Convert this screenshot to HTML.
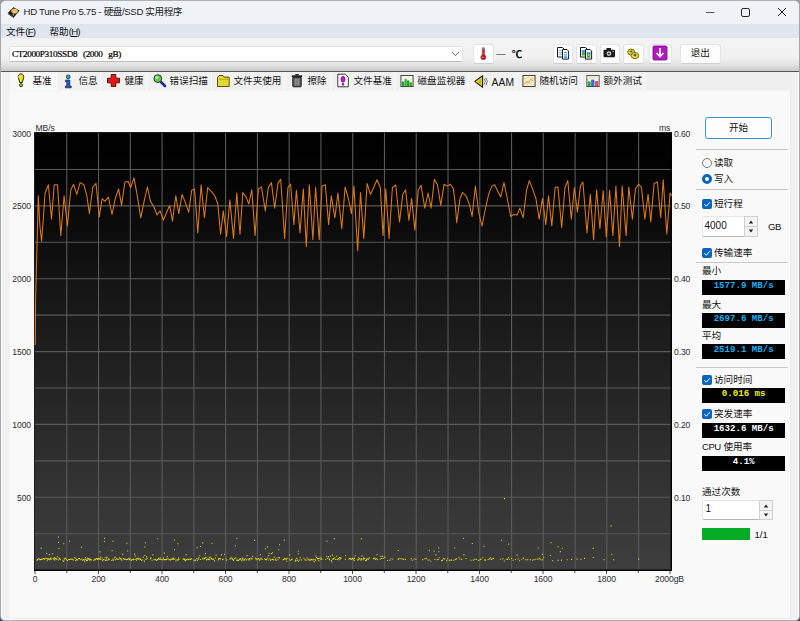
<!DOCTYPE html>
<html lang="zh-CN">
<head>
<meta charset="utf-8">
<title>HD Tune Pro 5.75 - 硬盘/SSD 实用程序</title>
<style>
*{box-sizing:border-box;margin:0;padding:0}
html,body{width:800px;height:621px;overflow:hidden}
body{position:relative;background:linear-gradient(#9c9c9c 0,#9c9c9c 50%,#2f5d7c 50%,#2f5d7c 100%);font-family:"Liberation Sans","Noto Sans CJK SC",sans-serif;font-size:9.6px;color:#1a1a1a}
.abs{position:absolute}
#win{position:absolute;left:0;top:0;width:800px;height:621px;background:#f0f0f0;border-radius:6px 6px 5px 5px;overflow:hidden;border:1px solid #a6a8ac;border-color:#b0b0b0 #a4a6a8 #a9b1bd #a2a8b2;box-shadow:inset 0 0 0 .8px #fcfcfc}
#titlebar{position:absolute;left:0;top:0;width:798px;height:23px;background:#eff3f8}
#title{position:absolute;left:22.5px;top:4px;letter-spacing:-.45px;font-size:9.6px;line-height:14px;color:#1b1b1b;white-space:nowrap}
.la{letter-spacing:-.27px}
.lb{letter-spacing:-.75px}
#menubar{position:absolute;left:0;top:23px;width:798px;height:14.4px;background:#dfe6ef}
.menu{position:absolute;top:1px;line-height:13px;font-size:9.6px;color:#111;white-space:nowrap}
#toolbar{position:absolute;left:0;top:37.4px;width:798px;height:33.9px;background:linear-gradient(#f3f3f3 0,#f1f1f1 60%,#e2e2e2 82%,#c9c9c9 100%);border-bottom:1.6px solid #555}
#combo{position:absolute;left:8.3px;top:7.8px;width:454px;height:16px;background:#fff;border:1px solid #e2e2e2;border-bottom-color:#bdbdbd;border-radius:2px}
#combo span{position:absolute;left:1.6px;top:.6px;font-family:"Liberation Serif","Noto Serif CJK SC",serif;font-size:9.2px;letter-spacing:-.36px;word-spacing:3.7px;line-height:13px;white-space:pre;color:#000;-webkit-text-stroke:.22px #000}
.tbtn{position:absolute;top:6.1px;height:19.2px;width:20.5px;background:#fdfdfd;border:1px solid #e4e4e4;border-bottom-color:#cfcfcf;border-radius:3px}
.tbtn svg{position:absolute;left:0;top:0}
#tabs{position:absolute;left:8.5px;top:71.3px;width:781px;height:18px}
.tab{position:absolute;top:0;height:18px;background:#f1f1f1;border-right:1px solid #fafafa}
.tab.act{background:#f9f9f9;border:none}
.tab span{position:absolute;top:2px;line-height:13px;font-size:9.6px;white-space:nowrap;color:#111}
.tab svg{position:absolute;top:1px}
#page{position:absolute;left:8.5px;top:89px;width:781.5px;height:528.5px;background:#f9f9f9;border:1px solid #ececec;border-top-color:#f4f4f4;border-left-color:#fbfbfb}
.ax{position:absolute;font-family:"Liberation Sans",sans-serif;letter-spacing:-.12px;font-size:8.6px;line-height:10px;color:#2c2c30;white-space:nowrap}
.lbl{position:absolute;font-size:9.6px;line-height:12px;white-space:nowrap;color:#111}
.sep{position:absolute;left:695px;width:92px;height:1px;background:#c9c9c9;margin-top:-.5px}
.box{position:absolute;left:701px;width:83.3px;height:15px;background:#000;text-align:center;font-family:"Liberation Mono",monospace;font-weight:bold;font-size:9.1px;line-height:12px;white-space:pre;color:#10b2f4}
.chk{position:absolute;left:700.6px;width:10px;height:10px;background:#0a64c2;border-radius:2px}
.chk svg{position:absolute;left:0;top:0}
.spin{position:absolute;background:#fff;border:1px solid #e6e6e6;border-bottom-color:#b4b4b4;border-radius:2px}
.spin .v{position:absolute;left:4px;font-family:"Liberation Sans",sans-serif;font-size:9.6px;color:#111}
.spin .ud{position:absolute;right:-1px;top:-1px;bottom:-1px;width:14px;background:#f3f3f3;border:1px solid #cfcfcf}
</style>
</head>
<body>
<div id="win">
  <div id="titlebar">
    <svg class="abs" style="left:6px;top:5px" width="14" height="13" viewBox="0 0 14 13">
      <polygon points="0.8,7 6.5,1.2 12.6,4.6 6.8,11.4" fill="#161616"/>
      <polygon points="0.8,7 6.8,11.4 6.8,12.3 0.8,8" fill="#3a3a3a"/>
      <ellipse cx="7.6" cy="5.1" rx="3.3" ry="2.7" fill="#e8a93c"/>
      <ellipse cx="7.6" cy="5.1" rx="2.3" ry="1.8" fill="#f5c56a"/>
      <ellipse cx="7.7" cy="5" rx="0.9" ry="0.6" fill="#aeb4c4"/>
      <rect x="5.6" y="7.6" width="1.6" height="2" fill="#9a9a9a"/>
    </svg>
    <div id="title"><span class="la">HD Tune Pro 5.75 - </span>硬盘/<span class="la">SSD</span> 实用程序</div>
    <svg class="abs" style="left:700px;top:4px" width="92" height="16" viewBox="0 0 92 16">
      <g fill="none" stroke="#222" stroke-width="1">
        <path d="M5,7.5h8.4" stroke="#444" stroke-width=".9"/>
        <rect x="40.5" y="3.5" width="8" height="8" rx="1.6"/>
        <path d="M77,3l8,8M85,3l-8,8"/>
      </g>
    </svg>
  </div>
  <div id="menubar">
    <div class="menu" style="left:5px">文件<span class="lb">(<u>F</u>)</span></div>
    <div class="menu" style="left:48.5px">帮助<span class="lb">(<u>H</u>)</span></div>
  </div>
  <div id="toolbar">
    <div id="combo"><span>CT2000P310SSD8 (2000 gB)</span>
      <svg class="abs" style="left:441px;top:4px" width="9" height="6" viewBox="0 0 9 6"><path d="M1,1l3.5,3.5L8,1" fill="none" stroke="#555" stroke-width="0.9"/></svg>
    </div>
    <!-- thermometer -->
    <div class="tbtn" style="left:471.5px;width:21.5px">
      <svg width="19" height="16" viewBox="0 0 19 16"><rect x="8.3" y="2.6" width="2.4" height="9" rx="1.1" fill="#e62020" stroke="#555" stroke-width=".5"/><rect x="8.5" y="2.7" width="2" height="1.6" rx=".8" fill="#28b8f0"/><circle cx="9.3" cy="12.3" r="2.5" fill="#e01010" stroke="#444" stroke-width=".5"/><circle cx="8.7" cy="12.4" r=".7" fill="#f8b0a0"/></svg>
    </div>
    <div class="abs" style="left:495px;top:8.2px;font-size:9.6px;line-height:12px;white-space:nowrap;color:#222">— <span style="margin-left:3.5px;font-weight:bold;color:#000;font-size:10.5px;position:relative;top:1.2px">℃</span></div>
    <!-- copy -->
    <div class="tbtn" style="left:551.5px">
      <svg width="18" height="17" viewBox="0 0 18 17"><path d="M3.5,2.5h5l1.5,1.5v8h-6.5z" fill="#fff" stroke="#1a1a1a" stroke-width="1"/><path d="M5,5.5h3.5M5,7.5h3.5M5,9.5h3.5" stroke="#6ab4ee" stroke-width="1.2"/><path d="M8.5,4.5h4.5l1.6,1.6v8h-6.1z" fill="#fff" stroke="#1a1a1a" stroke-width="1"/><path d="M10,7.5h3.2M10,9.3h3.2M10,11.1h3.2M10,12.6h3.2" stroke="#4a9ee6" stroke-width="1.1"/></svg>
    </div>
    <div class="tbtn" style="left:575px">
      <svg width="18" height="17" viewBox="0 0 18 17"><path d="M3.5,2.5h5l1.5,1.5v8h-6.5z" fill="#fff" stroke="#1a1a1a" stroke-width="1"/><rect x="4.8" y="5" width="3.8" height="5.5" fill="#48b050"/><rect x="4.8" y="5" width="3.8" height="2" fill="#4a9ee6"/><path d="M8.5,4.5h4.5l1.6,1.6v8h-6.1z" fill="#fff" stroke="#1a1a1a" stroke-width="1"/><rect x="9.8" y="7" width="3.6" height="5.8" fill="#40a848"/><rect x="9.8" y="7" width="3.6" height="2" fill="#4a9ee6"/><rect x="11" y="9.5" width="1.5" height="1.5" fill="#e0c030"/></svg>
    </div>
    <!-- camera -->
    <div class="tbtn" style="left:598.5px">
      <svg width="18" height="16" viewBox="1 .2 18 16"><rect x="3.5" y="5" width="11.5" height="7.5" rx="1" fill="#1c1c1c"/><rect x="6.5" y="3.2" width="4.5" height="2.4" fill="#1c1c1c"/><circle cx="9" cy="8.8" r="2.3" fill="#d8d8d8"/><circle cx="9" cy="8.8" r="1.2" fill="#444"/><rect x="12.4" y="6" width="1.6" height="1.2" fill="#5ac85a"/></svg>
    </div>
    <!-- link / coins -->
    <div class="tbtn" style="left:622px">
      <svg width="18" height="17" viewBox="0 0 18 17"><ellipse cx="7.2" cy="7" rx="3.6" ry="3" fill="#e4d630" stroke="#6a6010" stroke-width=".9"/><ellipse cx="7.2" cy="6.6" rx="1.3" ry="1" fill="#5a5a4a"/><ellipse cx="11" cy="10.6" rx="3.8" ry="3.1" fill="#e4d630" stroke="#6a6010" stroke-width=".9"/><ellipse cx="11" cy="10.2" rx="1.4" ry="1.1" fill="#5a5a4a"/></svg>
    </div>
    <!-- download -->
    <div class="tbtn" style="left:647.5px;width:23px"><!--dl-->
      <svg width="20" height="16" viewBox="0 0 20 16"><rect x="3" y="1" width="14" height="14" rx="1.2" fill="#b418c4" stroke="#6a0a78" stroke-width=".8"/><path d="M10,3v8M6.5,8l3.5,3.6L13.5,8" fill="none" stroke="#fff" stroke-width="1.7"/></svg>
    </div>
    <div class="tbtn" style="left:678.5px;width:41.5px;text-align:center;line-height:16px;font-size:9.6px;color:#111">退出</div>
  </div>

  <div id="tabs">
    <div class="tab act" style="left:0px;width:47px"><svg style="left:4px;top:1px" width="12" height="15" viewBox="0 0 12 15"><path d="M7,0.9c2.3,0 3,1.8 2.6,3.6l-1.3,5h-2.6l-1.3,-5c-0.4,-1.8 0.3,-3.6 2.6,-3.6z" fill="#ece420" stroke="#2a2600" stroke-width="1"/><path d="M5.6,2.2c-0.8,0.6 -0.8,1.8 -0.4,3" stroke="#fffcb0" stroke-width=".8" fill="none"/><circle cx="7" cy="12.2" r="1.5" fill="#e8e020" stroke="#2a2600" stroke-width="1"/></svg><span style="left:23px">基准</span></div>
    <div class="tab" style="left:47px;width:44px"><svg style="left:5px;top:1.7px" width="12" height="15" viewBox="0 0 12 15"><circle cx="6.2" cy="2.8" r="1.9" fill="#2a9ae8" stroke="#123" stroke-width=".7"/><path d="M3.6,6h4.2v6h1.4v1.8h-5.8v-1.8h1.4v-4.2h-1.2z" fill="#2a58d8" stroke="#123" stroke-width=".7"/></svg><span style="left:22px">信息</span></div>
    <div class="tab" style="left:91px;width:46px"><svg style="left:5px;top:1px" width="15" height="15" viewBox="0 0 15 15"><path d="M5.2,1.5h4.6v3.7h3.7v4.6h-3.7v3.7h-4.6v-3.7h-3.7v-4.6h3.7z" fill="#e81818" stroke="#4a0a0a" stroke-width=".9"/></svg><span style="left:24px">健康</span></div>
    <div class="tab" style="left:137px;width:65px"><svg style="left:5px;top:1px" width="15" height="15" viewBox="0 0 15 15"><path d="M8.5,8.5l4.5,4.5" stroke="#1a2a8a" stroke-width="2.6" stroke-linecap="round"/><circle cx="5.8" cy="5.6" r="3.9" fill="#58d048" stroke="#333" stroke-width="1"/><circle cx="4.8" cy="4.6" r="1.4" fill="#c8f8b8"/></svg><span style="left:23px">错误扫描</span></div>
    <div class="tab" style="left:202px;width:73px"><svg style="left:4px;top:1px" width="15" height="15" viewBox="0 0 15 15"><path d="M1.5,4.5l1.5,-2h4l1.2,1.6h5v9.4h-11.7z" fill="#e6d838" stroke="#4a4200" stroke-width=".9"/><path d="M3,6.2h10.2v7.3" fill="none" stroke="#a89a10" stroke-width=".8"/></svg><span style="left:22px">文件夹使用</span></div>
    <div class="tab" style="left:275px;width:46px"><svg style="left:5px;top:1px" width="14" height="15" viewBox="0 0 14 15"><rect x="2.8" y="4" width="8.4" height="9.8" rx=".8" fill="#555" stroke="#111" stroke-width=".9"/><rect x="1.8" y="2.3" width="10.4" height="1.9" fill="#222"/><rect x="5.3" y="1" width="3.4" height="1.5" fill="#222"/><path d="M5.2,5.5v7M7,5.5v7M8.8,5.5v7" stroke="#bbb" stroke-width=".8"/></svg><span style="left:23px">擦除</span></div>
    <div class="tab" style="left:321px;width:64px"><svg style="left:5px;top:1px" width="14" height="15" viewBox="0 0 14 15"><path d="M1.8,1.2h7.5l3,3v9.6h-10.5z" fill="#fff" stroke="#222" stroke-width=".9"/><ellipse cx="7" cy="6.3" rx="2" ry="3" fill="#c018d0" stroke="#50085a" stroke-width=".6"/><circle cx="7" cy="11.3" r="1.1" fill="#c018d0" stroke="#50085a" stroke-width=".5"/></svg><span style="left:23px">文件基准</span></div>
    <div class="tab" style="left:385px;width:74px"><svg style="left:5.5px;top:1.8px" width="14" height="14" viewBox="0 0 15 15"><rect x="1" y="1.5" width="13" height="12" fill="#f4f4e8" stroke="#222" stroke-width=".9"/><rect x="2" y="8" width="2.5" height="5" fill="#28a028"/><rect x="4.8" y="5.5" width="2.5" height="7.5" fill="#28b838"/><rect x="7.6" y="7" width="2.5" height="6" fill="#209828"/><rect x="10.4" y="9" width="2.6" height="4" fill="#28b028"/></svg><span style="left:23px">磁盘监视器</span></div>
    <div class="tab" style="left:459px;width:48px"><svg style="left:5px;top:1.7px" width="15" height="15" viewBox="0 0 15 15"><path d="M0.8,7.4l7.8,-5.6v11.4z" fill="#e2d820" stroke="#1a1a1a" stroke-width="1.1" stroke-linejoin="round"/><path d="M6,5.5v4" stroke="#8a8410" stroke-width=".8"/><path d="M10.3,4.6q2,2.8 0,5.8M12,3.8q2.6,3.6 0,7.4" fill="none" stroke="#666" stroke-width=".9"/></svg><span style="left:23px;top:3.6px;font-size:10.3px;letter-spacing:.1px">AAM</span></div>
    <div class="tab" style="left:507px;width:65px"><svg style="left:5px;top:1.8px" width="14" height="14" viewBox="0 0 15 15"><rect x="1" y="1.5" width="13" height="12" fill="#f6f0c8" stroke="#222" stroke-width=".9"/><path d="M2.5,11l2.5,-3l2,1.5l2.5,-4l2.5,2" fill="none" stroke="#e07830" stroke-width=".9"/><path d="M3,5h1M6,4h1M9,9.5h1M11,4.5h1M5,11.5h1" stroke="#b8a020" stroke-width=".9"/></svg><span style="left:23px">随机访问</span></div>
    <div class="tab" style="left:572px;width:63px"><svg style="left:4.5px;top:1.8px" width="14" height="14" viewBox="0 0 15 15"><rect x="1" y="1.5" width="13" height="12" fill="#fafafa" stroke="#222" stroke-width=".9"/><rect x="1.5" y="2" width="12" height="3" fill="#f0e8c0"/><rect x="2" y="8" width="3" height="5" fill="#28a838"/><rect x="5.5" y="6" width="3.5" height="7" fill="#3a68d8"/><rect x="9.5" y="7.5" width="3.5" height="5.5" fill="#d85858"/></svg><span style="left:22px">额外测试</span></div>
  </div>
  <div id="page"></div>

  <!-- chart -->
  <svg class="abs" style="left:-1px;top:99px" width="700" height="500" viewBox="0 100 700 500">
    <defs>
      <linearGradient id="cg" x1="0" y1="0" x2="0" y2="1">
        <stop offset="0" stop-color="#000"/><stop offset="0.12" stop-color="#050505"/><stop offset="0.35" stop-color="#151515"/><stop offset="0.6" stop-color="#252525"/><stop offset="0.85" stop-color="#363636"/><stop offset="1" stop-color="#3e3e3e"/>
      </linearGradient>
    </defs>
    <rect x="34" y="132" width="638" height="439" fill="#0c0c0c"/>
    <rect x="35" y="133" width="636" height="437" fill="url(#cg)"/>
    <g stroke="#5a5a5a" stroke-width="1.1">
      <path d="M66.77,133V570"/>
      <path d="M98.54,133V570"/>
      <path d="M130.31,133V570"/>
      <path d="M162.08,133V570"/>
      <path d="M193.85,133V570"/>
      <path d="M225.62,133V570"/>
      <path d="M257.39,133V570"/>
      <path d="M289.16,133V570"/>
      <path d="M320.93,133V570"/>
      <path d="M352.7,133V570"/>
      <path d="M384.47,133V570"/>
      <path d="M416.24,133V570"/>
      <path d="M448.01,133V570"/>
      <path d="M479.78,133V570"/>
      <path d="M511.55,133V570"/>
      <path d="M543.32,133V570"/>
      <path d="M575.09,133V570"/>
      <path d="M606.86,133V570"/>
      <path d="M638.63,133V570"/>
      <path d="M35,533.68H671"/>
      <path d="M35,497.26H671"/>
      <path d="M35,460.84H671"/>
      <path d="M35,424.42H671"/>
      <path d="M35,388H671"/>
      <path d="M35,351.58H671"/>
      <path d="M35,315.16H671"/>
      <path d="M35,278.74H671"/>
      <path d="M35,242.32H671"/>
      <path d="M35,205.9H671"/>
      <path d="M35,169.48H671"/>
    </g>
    <rect x="34.5" y="132.5" width="637" height="438" fill="none" stroke="#1c1c1c" stroke-width="1"/>
    <path d="M34,570.2h638" stroke="#000" stroke-width="1.6"/>
    <path d="M671.3,132v439" stroke="#000" stroke-width="1.4"/>
    <g stroke="#4a4a4a" stroke-width="1">
      <path d="M35,571v3"/>
      <path d="M66.75,571v2"/>
      <path d="M98.5,571v3"/>
      <path d="M130.25,571v2"/>
      <path d="M162,571v3"/>
      <path d="M193.75,571v2"/>
      <path d="M225.5,571v3"/>
      <path d="M257.25,571v2"/>
      <path d="M289,571v3"/>
      <path d="M320.75,571v2"/>
      <path d="M352.5,571v3"/>
      <path d="M384.25,571v2"/>
      <path d="M416,571v3"/>
      <path d="M447.75,571v2"/>
      <path d="M479.5,571v3"/>
      <path d="M511.25,571v2"/>
      <path d="M543,571v3"/>
      <path d="M574.75,571v2"/>
      <path d="M606.5,571v3"/>
      <path d="M638.25,571v2"/>
      <path d="M670,571v3"/>
    </g>
    <path d="M35.3,345.0 L35.6,300.0 L38.3,195.8 L39.9,226.0 L41.6,241.1 L43.2,220.5 L45.1,193.0 L48.4,184.8 L51.5,219.1 L54.2,184.8 L57.5,184.8 L60.8,235.6 L64.1,195.8 L67.4,226.0 L70.7,190.3 L73.5,184.2 L76.8,194.4 L80.1,182.6 L83.9,184.8 L86.9,195.8 L89.4,213.6 L92.7,187.5 L96.0,183.4 L99.3,216.9 L102.1,198.5 L104.8,201.3 L108.4,197.1 L112.0,214.5 L115.3,198.5 L118.6,188.9 L121.6,205.4 L124.9,182.0 L128.2,181.5 L130.7,187.5 L134.0,177.9 L137.3,195.8 L140.8,217.8 L144.1,201.3 L147.4,187.0 L150.5,201.3 L153.8,206.8 L157.1,215.0 L160.1,210.9 L163.4,220.0 L166.7,212.3 L169.7,205.4 L172.5,221.1 L175.8,195.8 L178.8,213.6 L182.1,194.4 L185.4,202.6 L188.7,212.3 L191.7,190.3 L194.5,188.9 L197.8,232.9 L201.1,184.8 L204.4,217.8 L207.7,187.5 L211.5,191.6 L214.8,195.8 L217.8,204.0 L220.6,234.3 L223.3,210.9 L226.6,236.5 L229.9,199.9 L233.5,238.4 L236.8,193.0 L240.0,234.3 L242.8,192.5 L246.1,197.1 L248.8,204.0 L251.8,189.7 L255.1,235.6 L258.4,188.9 L261.5,187.0 L265.3,210.9 L268.3,187.5 L271.4,182.6 L274.7,208.1 L278.0,183.4 L280.7,179.3 L284.6,238.4 L287.9,187.5 L290.6,184.2 L293.9,224.6 L296.4,190.3 L300.0,232.9 L303.3,188.9 L306.3,246.6 L309.3,184.8 L312.9,239.8 L315.6,187.5 L319.2,239.8 L322.0,186.1 L325.3,184.8 L328.6,224.6 L331.3,195.8 L334.9,217.8 L337.9,193.0 L341.8,228.8 L345.1,187.0 L348.4,198.5 L351.4,213.6 L353.9,186.1 L357.7,250.8 L360.5,192.5 L363.8,238.4 L367.1,183.4 L370.4,194.4 L373.7,187.5 L377.0,179.8 L380.3,187.5 L383.0,235.6 L385.8,188.9 L389.1,238.4 L392.4,187.5 L395.7,184.8 L399.5,221.9 L402.8,194.4 L405.6,189.7 L408.9,220.5 L411.6,198.5 L414.9,230.1 L418.2,190.3 L421.0,185.3 L424.8,208.1 L428.1,193.0 L431.1,208.1 L434.4,179.3 L437.5,184.8 L440.8,205.4 L444.1,184.2 L447.1,186.1 L450.4,184.2 L453.4,188.9 L455.0,201.3 L456.7,222.7 L460.0,198.5 L462.7,192.5 L466.0,195.8 L469.3,204.0 L472.1,216.4 L475.4,186.1 L478.7,212.3 L482.0,226.0 L485.3,209.5 L488.6,194.4 L491.9,186.1 L494.6,184.8 L497.9,191.6 L500.7,197.1 L504.0,182.6 L507.3,198.5 L510.6,216.4 L513.9,214.5 L517.2,215.0 L519.9,208.1 L523.2,217.8 L526.5,190.3 L529.3,180.6 L532.6,188.9 L535.9,198.5 L539.2,219.1 L542.5,198.5 L545.8,224.6 L548.5,195.8 L551.8,226.0 L555.1,187.5 L557.9,187.0 L561.7,227.4 L565.0,187.5 L567.8,180.6 L571.3,219.1 L574.4,187.5 L577.4,212.3 L580.4,186.1 L582.9,182.0 L587.0,232.9 L590.3,194.4 L593.6,239.8 L596.6,189.7 L599.9,228.8 L603.2,190.8 L606.3,237.0 L609.6,190.3 L612.9,235.6 L615.9,186.1 L619.5,246.6 L622.2,186.1 L626.1,235.6 L628.8,187.0 L632.4,219.1 L635.4,188.9 L638.7,184.2 L641.5,187.5 L644.8,219.1 L648.1,194.4 L650.8,221.9 L654.1,183.4 L657.4,182.0 L660.7,217.8 L663.2,179.8 L666.8,234.3 L670.1,193.0 L671.7,195.8" fill="none" stroke="#dc7a18" stroke-width="1.05" stroke-linejoin="round"/>
    <path d="M36.6,560.1h1M36.9,559.6h1M37.3,559.4h1M38.1,558.8h1M39.2,559.1h1M39.8,559.6h1M40.7,559.5h1M41.5,559.3h1M42.2,559.0h1M43.0,558.6h1M44.1,559.2h1M44.4,558.7h1M45.5,558.3h1M46.5,558.6h1M46.8,560.7h1M47.5,559.1h1M47.9,559.2h1M48.5,558.8h1M49.3,559.6h1M49.9,558.7h1M50.4,558.1h1M50.7,559.3h1M51.8,553.7h1M52.7,558.4h1M53.4,559.5h1M53.8,557.7h1M54.2,560.0h1M54.7,558.4h1M55.7,558.9h1M56.3,559.2h1M56.7,556.7h1M57.8,560.0h1M58.4,557.8h1M58.9,558.9h1M59.9,559.3h1M62.3,560.2h1M63.1,561.4h1M63.8,558.3h1M64.2,559.7h1M65.2,558.4h1M66.2,559.8h1M67.1,560.5h1M68.3,559.5h1M69.2,559.5h1M70.1,559.3h1M71.0,559.3h1M72.0,559.2h1M72.8,559.9h1M73.9,557.7h1M74.9,558.3h1M75.3,560.6h1M76.0,559.2h1M76.7,560.0h1M77.2,559.8h1M78.2,558.5h1M79.1,558.6h1M80.2,559.8h1M81.3,559.0h1M82.0,560.3h1M83.0,559.7h1M83.4,559.6h1M84.1,561.1h1M84.8,559.4h1M85.1,557.5h1M86.0,560.6h1M86.4,559.1h1M86.9,560.5h1M87.3,558.4h1M87.7,558.9h1M88.5,559.3h1M88.9,558.7h1M89.4,560.1h1M89.8,559.4h1M90.7,559.9h1M93.3,560.5h1M93.8,559.3h1M94.8,559.6h1M95.7,558.5h1M96.6,559.0h1M96.9,559.4h1M97.3,558.9h1M97.9,558.6h1M98.4,558.6h1M99.0,559.0h1M99.7,559.1h1M100.0,557.0h1M100.5,559.2h1M101.6,558.0h1M102.0,560.7h1M102.8,559.6h1M103.6,559.7h1M104.6,557.8h1M105.0,560.4h1M105.8,560.1h1M106.1,558.2h1M106.5,557.1h1M107.4,560.1h1M108.1,559.1h1M108.9,559.2h1M111.3,560.5h1M112.2,559.0h1M112.9,560.1h1M114.0,557.8h1M114.7,559.6h1M115.2,557.2h1M116.2,558.9h1M116.7,559.3h1M117.4,559.2h1M117.9,559.2h1M119.0,557.7h1M119.6,558.6h1M120.2,558.8h1M120.7,559.1h1M121.3,560.2h1M122.2,554.1h1M122.9,558.8h1M123.2,558.5h1M124.1,559.3h1M124.7,559.4h1M125.8,559.6h1M126.9,559.3h1M127.3,559.5h1M128.3,558.4h1M128.9,559.7h1M129.3,559.6h1M129.8,558.8h1M130.9,560.4h1M131.6,559.5h1M132.7,559.8h1M133.1,559.1h1M134.0,554.1h1M134.5,559.5h1M134.9,556.0h1M135.7,558.8h1M136.0,560.3h1M136.7,558.9h1M137.6,558.0h1M138.1,559.2h1M138.5,559.0h1M139.4,558.7h1M140.0,559.4h1M141.1,560.5h1M141.7,559.7h1M142.8,557.3h1M143.9,561.1h1M144.4,555.5h1M145.0,559.2h1M145.6,559.3h1M146.1,556.7h1M146.7,558.4h1M150.1,558.6h1M150.4,557.9h1M151.5,560.3h1M152.4,554.9h1M153.5,559.8h1M154.6,559.3h1M155.2,559.8h1M156.2,560.5h1M156.8,559.7h1M157.3,559.5h1M157.9,558.4h1M158.6,559.2h1M159.3,559.2h1M159.7,557.7h1M160.3,559.2h1M161.4,559.8h1M162.5,559.6h1M162.9,558.1h1M164.0,559.6h1M164.8,559.6h1M165.4,559.6h1M166.3,559.1h1M166.7,556.6h1M167.6,558.8h1M168.6,559.8h1M169.4,559.7h1M170.1,559.9h1M170.7,559.0h1M171.3,559.2h1M172.0,559.3h1M172.6,558.1h1M173.0,558.8h1M173.4,559.5h1M174.4,559.0h1M175.5,560.9h1M176.6,559.8h1M177.6,560.1h1M178.1,558.0h1M178.5,559.4h1M182.6,559.1h1M183.4,558.9h1M184.1,560.0h1M184.4,559.3h1M185.1,560.6h1M185.5,554.8h1M185.8,559.5h1M186.2,559.6h1M187.3,559.1h1M188.5,559.6h1M189.6,559.0h1M190.0,559.4h1M191.1,558.8h1M193.5,560.2h1M194.6,560.8h1M195.3,559.9h1M196.4,558.5h1M197.0,560.2h1M198.0,559.1h1M198.3,557.7h1M199.2,555.8h1M200.0,559.5h1M202.3,558.9h1M202.7,558.3h1M203.6,558.7h1M204.1,558.2h1M204.7,558.0h1M205.5,557.4h1M206.0,559.9h1M206.7,559.2h1M207.8,559.1h1M208.5,559.5h1M208.8,559.8h1M209.1,557.9h1M209.6,557.1h1M210.6,559.0h1M211.2,558.6h1M212.1,559.3h1M212.6,559.1h1M213.2,559.3h1M214.0,560.9h1M215.1,558.0h1M215.6,555.1h1M217.8,559.9h1M218.1,558.9h1M219.0,558.6h1M220.0,558.8h1M221.0,554.9h1M222.0,559.6h1M222.6,559.2h1M225.3,558.7h1M226.2,560.1h1M229.3,559.0h1M230.3,558.7h1M230.6,557.3h1M231.6,558.3h1M232.1,559.3h1M232.6,559.5h1M233.0,560.4h1M233.9,558.7h1M234.9,558.0h1M235.4,558.0h1M236.1,560.3h1M237.0,560.1h1M237.9,560.5h1M238.7,559.6h1M239.3,558.8h1M239.7,558.7h1M240.2,559.1h1M241.3,560.6h1M241.9,559.1h1M242.4,558.1h1M243.1,560.0h1M244.0,559.9h1M244.9,558.7h1M245.9,559.9h1M246.6,555.6h1M247.6,559.2h1M248.4,560.0h1M248.9,558.5h1M249.2,559.8h1M250.3,558.3h1M251.0,558.7h1M251.7,558.9h1M252.1,556.4h1M255.1,558.1h1M255.6,559.8h1M256.3,558.8h1M257.3,559.5h1M258.1,558.5h1M259.1,560.1h1M259.5,559.6h1M260.0,554.8h1M260.5,558.4h1M261.4,559.3h1M261.7,559.3h1M264.1,558.8h1M265.0,559.6h1M265.6,559.7h1M266.0,559.4h1M267.0,558.0h1M267.7,560.0h1M268.2,555.6h1M268.6,553.3h1M269.3,558.8h1M270.0,560.2h1M270.3,559.7h1M270.9,553.6h1M271.7,559.4h1M272.4,559.4h1M273.2,560.0h1M273.8,557.0h1M274.8,559.1h1M275.6,560.4h1M276.4,557.8h1M277.4,559.6h1M278.3,557.5h1M279.1,557.9h1M282.6,559.6h1M283.5,559.4h1M284.1,558.2h1M284.9,559.0h1M285.9,559.1h1M286.2,561.3h1M286.9,558.3h1M288.8,559.0h1M289.2,554.9h1M289.7,560.5h1M290.7,559.6h1M291.6,559.1h1M294.7,561.3h1M295.1,560.0h1M295.4,560.6h1M296.3,558.4h1M297.0,560.1h1M297.9,561.2h1M298.9,560.0h1M299.9,557.7h1M300.8,559.9h1M303.4,558.3h1M304.4,559.7h1M305.5,560.1h1M306.6,558.0h1M307.5,559.7h1M308.4,559.0h1M309.3,560.4h1M309.8,560.0h1M310.6,559.4h1M311.5,559.7h1M312.2,560.0h1M313.1,559.2h1M313.7,561.6h1M314.4,559.7h1M315.0,560.1h1M315.4,556.1h1M316.1,557.5h1M316.8,558.6h1M317.6,558.8h1M318.0,558.5h1M318.3,560.6h1M318.7,558.2h1M319.8,559.3h1M320.4,557.3h1M320.9,558.7h1M321.4,559.3h1M325.2,559.5h1M326.2,556.3h1M327.2,558.4h1M328.1,556.6h1M328.8,559.1h1M329.4,560.0h1M330.1,556.3h1M331.0,560.7h1M331.5,562.0h1M331.9,555.1h1M332.4,559.5h1M332.7,558.5h1M333.4,558.8h1M334.3,557.7h1M335.2,559.5h1M336.1,556.3h1M336.8,559.5h1M337.8,558.5h1M338.5,559.8h1M339.0,557.5h1M339.7,558.9h1M340.2,557.8h1M340.6,558.2h1M344.8,559.2h1M345.2,555.5h1M348.4,559.0h1M349.1,558.6h1M349.9,558.3h1M350.5,559.5h1M351.4,558.9h1M352.1,558.4h1M353.0,559.1h1M353.7,560.5h1M354.0,558.4h1M354.6,555.8h1M357.1,559.9h1M358.0,559.8h1M358.3,557.7h1M358.9,558.8h1M359.6,558.8h1M360.4,560.1h1M361.1,558.9h1M361.5,555.9h1M362.5,559.8h1M363.0,558.1h1M363.6,558.9h1M364.2,558.2h1M365.0,560.5h1M365.5,560.7h1M365.9,559.9h1M366.3,559.2h1M366.9,558.7h1M367.9,559.1h1M368.8,557.9h1M372.9,558.4h1M373.7,558.7h1M374.5,558.0h1M375.1,559.5h1M376.1,558.7h1M376.5,554.7h1M377.1,559.7h1M379.8,559.1h1M380.5,556.4h1M381.2,558.5h1M382.0,556.3h1M382.7,558.3h1M383.8,557.3h1M384.5,557.3h1M387.1,560.5h1M389.4,560.3h1M390.4,558.7h1M392.3,559.2h1M397.8,559.4h1M398.5,558.5h1M400.5,558.6h1M402.2,559.0h1M403.1,559.5h1M404.8,559.4h1M410.7,558.6h1M411.7,560.3h1M413.5,559.0h1M415.4,559.4h1M422.2,559.6h1M424.5,558.6h1M426.1,558.2h1M427.4,560.0h1M428.6,560.0h1M430.4,561.2h1M434.3,559.5h1M435.4,554.9h1M436.7,559.7h1M437.7,559.5h1M438.7,557.8h1M441.2,560.6h1M442.1,560.1h1M443.3,558.6h1M444.2,559.0h1M446.2,560.6h1M447.0,558.7h1M448.8,560.3h1M449.6,560.1h1M451.1,560.1h1M453.4,560.4h1M454.8,559.4h1M456.0,558.9h1M458.4,557.7h1M459.4,559.0h1M461.3,559.4h1M463.4,554.6h1M465.6,558.5h1M470.4,560.3h1M472.8,560.1h1M474.3,559.1h1M475.8,559.5h1M478.1,560.4h1M479.7,559.6h1M480.5,559.1h1M482.4,557.8h1M483.9,560.0h1M485.1,560.1h1M487.6,559.5h1M488.9,558.9h1M489.9,557.9h1M490.8,559.5h1M491.6,558.9h1M493.0,558.4h1M499.8,559.2h1M502.3,558.9h1M503.8,561.0h1M505.7,559.3h1M506.9,559.4h1M508.0,557.7h1M509.0,559.2h1M511.2,558.5h1M512.6,560.2h1M514.9,559.5h1M516.5,555.1h1M517.6,559.0h1M519.1,560.7h1M521.3,559.2h1M523.0,558.1h1M525.4,559.6h1M527.2,559.8h1M529.7,559.6h1M532.2,560.3h1M533.5,559.6h1M535.4,559.3h1M537.4,559.1h1M538.8,558.2h1M539.7,559.0h1M540.6,560.0h1M542.3,559.8h1M543.2,557.2h1M224.0,554.3h1M174.0,549.7h1M326.4,541.3h1M501.0,540.3h1M157.3,538.8h1M40.6,548.1h1M173.9,540.0h1M163.8,553.1h1M204.9,553.6h1M111.6,550.7h1M397.8,550.5h1M283.7,540.1h1M266.9,546.9h1M360.8,538.7h1M80.8,547.3h1M46.2,553.5h1M112.4,541.3h1M48.8,554.8h1M104.1,538.4h1M58.1,542.4h1M202.3,542.9h1M537.7,548.0h1M278.3,549.7h1M462.9,538.2h1M483.5,546.3h1M559.8,551.6h1M58.4,548.5h1M541.8,554.4h1M272.0,552.8h1M144.3,547.0h1M438.3,548.0h1M99.4,551.9h1M234.8,546.0h1M177.5,543.7h1M236.3,538.3h1M561.8,548.3h1M254.1,540.4h1M200.0,546.5h1M196.6,547.7h1M333.7,538.6h1M297.7,551.2h1M144.9,542.8h1M297.8,554.0h1M127.2,551.0h1M265.0,548.8h1M428.8,550.2h1M63.2,543.7h1M433.6,551.3h1M438.4,551.8h1M103.9,541.5h1M279.0,544.7h1M454.3,548.0h1M126.4,543.2h1M69.1,541.2h1M211.5,543.2h1M58.0,537.0h1M550.5,542.8h1M557.6,546.7h1M549.8,555.5h1M552.1,560.7h1M557.6,560.4h1M560.9,560.1h1M566.7,559.7h1M571.0,559.4h1M576.5,559.1h1M580.4,559.4h1M584.0,558.4h1M592.7,548.4h1M592.7,557.5h1M603.5,559.7h1M610.6,525.9h1M611.3,554.2h1M613.2,559.7h1M638.2,559.1h1M504.0,498.6h1M508.2,544.1h1M471.8,543.5h1" stroke="#f2ea10" stroke-width="1.1" stroke-opacity=".95" fill="none"/>
  </svg>
  <div class="ax" style="left:0px;width:30px;text-align:right;top:127.5px">3000</div>
  <div class="ax" style="left:0px;width:30px;text-align:right;top:200.3px">2500</div>
  <div class="ax" style="left:0px;width:30px;text-align:right;top:273.2px">2000</div>
  <div class="ax" style="left:0px;width:30px;text-align:right;top:346.0px">1500</div>
  <div class="ax" style="left:0px;width:30px;text-align:right;top:418.8px">1000</div>
  <div class="ax" style="left:0px;width:30px;text-align:right;top:491.6px">500</div>
  <div class="ax" style="left:673px;top:127.5px">0.60</div>
  <div class="ax" style="left:673px;top:200.3px">0.50</div>
  <div class="ax" style="left:673px;top:273.2px">0.40</div>
  <div class="ax" style="left:673px;top:346.0px">0.30</div>
  <div class="ax" style="left:673px;top:418.8px">0.20</div>
  <div class="ax" style="left:673px;top:491.6px">0.10</div>
  <div class="ax" style="left:34.500px;top:122px">MB/s</div>
  <div class="ax" style="left:658px;top:122px">ms</div>
  <div class="ax" style="left:14.0px;width:40px;text-align:center;top:573px">0</div>
  <div class="ax" style="left:77.5px;width:40px;text-align:center;top:573px">200</div>
  <div class="ax" style="left:141.0px;width:40px;text-align:center;top:573px">400</div>
  <div class="ax" style="left:204.5px;width:40px;text-align:center;top:573px">600</div>
  <div class="ax" style="left:268.0px;width:40px;text-align:center;top:573px">800</div>
  <div class="ax" style="left:331.5px;width:40px;text-align:center;top:573px">1000</div>
  <div class="ax" style="left:395.0px;width:40px;text-align:center;top:573px">1200</div>
  <div class="ax" style="left:458.5px;width:40px;text-align:center;top:573px">1400</div>
  <div class="ax" style="left:522.0px;width:40px;text-align:center;top:573px">1600</div>
  <div class="ax" style="left:585.5px;width:40px;text-align:center;top:573px">1800</div>
  <div class="ax" style="left:654px;top:573px">2000gB</div>

  <!-- right panel -->
  <div class="abs" style="left:704px;top:116px;width:67px;height:22px;border:1.2px solid #3e8ee0;border-radius:3px;background:#fdfdfd;text-align:center;line-height:19px;font-size:9.6px;color:#111">开始</div>
  <div class="sep" style="top:148px"></div>
  <div class="abs" style="left:700.5px;top:157px;width:10.4px;height:10.4px;border:1.2px solid #7c7c7c;border-radius:50%;background:#f6f6f6"></div>
  <div class="lbl" style="left:713px;top:156px">读取</div>
  <div class="abs" style="left:700.5px;top:173px;width:10.4px;height:10.4px;border:3.1px solid #0a64c2;border-radius:50%;background:#fff"></div>
  <div class="lbl" style="left:713px;top:172px">写入</div>
  <div class="sep" style="top:188px"></div>
  <div class="chk" style="top:198px"><svg width="10" height="10" viewBox="0 0 10 10"><path d="M2.3,5.2l2,2L7.9,3.2" fill="none" stroke="#fff" stroke-width="1"/></svg></div>
  <div class="lbl" style="left:713px;top:197px">短行程</div>
  <div class="spin" style="left:701px;top:215px;width:56px;height:21px"><span class="v" style="left:1.5px;top:3.2px;line-height:12px;font-size:10px">4000</span><div class="ud"><svg width="12" height="19" viewBox="0 0 12 19"><path d="M3.8,6.5h4.4l-2.2,-3zM3.8,12.5h4.4l-2.2,3z" fill="#222"/><path d="M0,9.5h12" stroke="#cfcfcf"/></svg></div></div>
  <div class="lbl" style="left:767px;top:220px;font-family:'Liberation Sans',sans-serif;letter-spacing:-.4px">GB</div>
  <div class="chk" style="top:247px"><svg width="10" height="10" viewBox="0 0 10 10"><path d="M2.3,5.2l2,2L7.9,3.2" fill="none" stroke="#fff" stroke-width="1"/></svg></div>
  <div class="lbl" style="left:713px;top:246px">传输速率</div>
  <div class="sep" style="top:261px"></div>
  <div class="lbl" style="left:701px;top:264px">最小</div>
  <div class="box" style="top:279px">1577.9 MB/s</div>
  <div class="lbl" style="left:701px;top:298px">最大</div>
  <div class="box" style="top:312px">2697.6 MB/s</div>
  <div class="lbl" style="left:701px;top:328.5px">平均</div>
  <div class="box" style="top:343px">2519.1 MB/s</div>
  <div class="sep" style="top:366px"></div>
  <div class="chk" style="top:374px"><svg width="10" height="10" viewBox="0 0 10 10"><path d="M2.3,5.2l2,2L7.9,3.2" fill="none" stroke="#fff" stroke-width="1"/></svg></div>
  <div class="lbl" style="left:713px;top:373px">访问时间</div>
  <div class="box" style="top:387px;color:#f4f000">0.016 ms</div>
  <div class="chk" style="top:408px"><svg width="10" height="10" viewBox="0 0 10 10"><path d="M2.3,5.2l2,2L7.9,3.2" fill="none" stroke="#fff" stroke-width="1"/></svg></div>
  <div class="lbl" style="left:713px;top:407px">突发速率</div>
  <div class="box" style="top:422px;color:#fff">1632.6 MB/s</div>
  <div class="lbl" style="left:701px;top:440px"><span class="la" style="letter-spacing:-.5px">CPU</span> 使用率</div>
  <div class="box" style="top:455px;color:#fff">4.1%</div>
  <div class="lbl" style="left:701px;top:485px">通过次数</div>
  <div class="spin" style="left:701px;top:499px;width:71px;height:20px"><span class="v" style="left:2.5px;top:1.5px;line-height:12px;font-size:10px">1</span><div class="ud"><svg width="12" height="19" viewBox="0 0 12 19"><path d="M3.8,6.5h4.4l-2.2,-3zM3.8,12.5h4.4l-2.2,3z" fill="#222"/><path d="M0,9.5h12" stroke="#cfcfcf"/></svg></div></div>
  <div class="abs" style="left:701px;top:527px;width:48px;height:12px;background:#06ac26"></div>
  <div class="lbl" style="left:753.5px;top:527.5px;font-family:'Liberation Sans',sans-serif">1/1</div>
</div>
</body>
</html>
